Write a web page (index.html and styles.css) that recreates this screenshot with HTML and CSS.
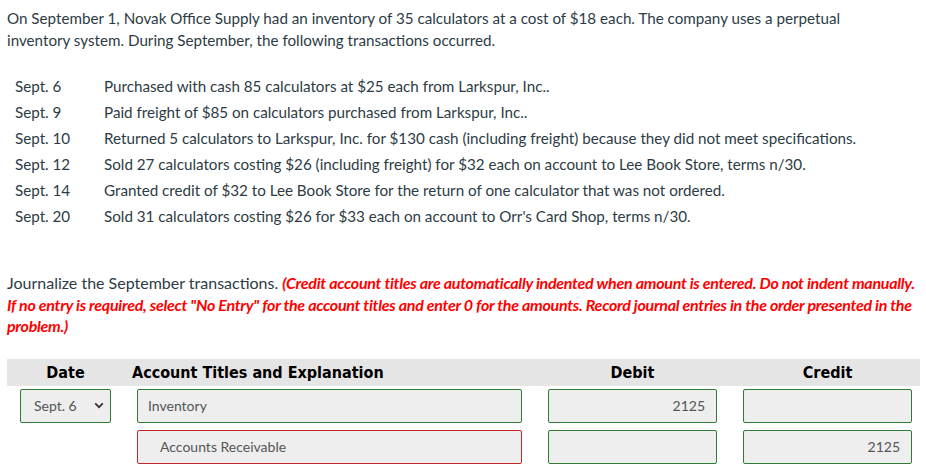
FILE: index.html
```
<!DOCTYPE html>
<html>
<head>
<meta charset="utf-8">
<link rel="stylesheet" href="styles.css">
</head>
<body>
<div class="page">
  <p class="intro">On September 1, Novak Office Supply had an inventory of 35 calculators at a cost of $18 each. The company uses a perpetual inventory system. During September, the following transactions occurred.</p>
  <div class="txns">
    <div class="d">Sept. 6</div><div class="t">Purchased with cash 85 calculators at $25 each from Larkspur, Inc..</div>
    <div class="d">Sept. 9</div><div class="t">Paid freight of $85 on calculators purchased from Larkspur, Inc..</div>
    <div class="d">Sept. 10</div><div class="t">Returned 5 calculators to Larkspur, Inc. for $130 cash (including freight) because they did not meet specifications.</div>
    <div class="d">Sept. 12</div><div class="t">Sold 27 calculators costing $26 (including freight) for $32 each on account to Lee Book Store, terms n/30.</div>
    <div class="d">Sept. 14</div><div class="t">Granted credit of $32 to Lee Book Store for the return of one calculator that was not ordered.</div>
    <div class="d">Sept. 20</div><div class="t">Sold 31 calculators costing $26 for $33 each on account to Orr's Card Shop, terms n/30.</div>
  </div>
  <p class="instr">Journalize the September transactions. <span class="red">(Credit account titles are automatically indented when amount is entered. Do not indent manually. If no entry is required, select "No Entry" for the account titles and enter 0 for the amounts. Record journal entries in the order presented in the problem.)</span></p>
  <div class="journal">
    <div class="grid head">
      <div class="h c">Date</div>
      <div class="h acct">Account Titles and Explanation</div>
      <div class="h c">Debit</div>
      <div class="h c">Credit</div>
    </div>
    <div class="grid row">
      <div class="box sel ok"><span>Sept. 6</span><svg width="10" height="7" viewBox="0 0 10 7"><path d="M1.2 1.4 L5 5.2 L8.8 1.4" fill="none" stroke="#333" stroke-width="1.8"/></svg></div>
      <div class="box ok">Inventory</div>
      <div class="box ok num">2125</div>
      <div class="box ok num"></div>
    </div>
    <div class="grid row">
      <div></div>
      <div class="box bad indent">Accounts Receivable</div>
      <div class="box ok num"></div>
      <div class="box ok num">2125</div>
    </div>
  </div>
</div>
</body>
</html>
```
FILE: styles.css
```
html, body {
  margin: 0;
  padding: 0;
  background: #fff;
}
.page {
  padding: 7px 5px 0 7px;
  font-family: Lato, "Noto Sans", sans-serif;
  font-size: 15.2px;
  color: #2d3b45;
}
.intro {
  margin: 0;
  line-height: 22px;
  max-width: 880px;
}
.txns {
  display: grid;
  grid-template-columns: 89px 1fr;
  grid-auto-rows: 26px;
  align-items: center;
  margin: 22px 0 0 8px;
}
.instr {
  margin: 43px 0 0 0;
  font-size: 16px;
  line-height: 21.6px;
}
.red {
  color: #ff0000;
  font-weight: bold;
  font-style: italic;
  letter-spacing: -0.27px;
}
.journal {
  margin-top: 22px;
  width: 913px;
}
.grid {
  display: grid;
  grid-template-columns: 91px 385px 169px 169px;
  column-gap: 26px;
  padding-left: 13px;
}
.head {
  background: #e5e5e5;
  height: 27px;
  align-items: center;
}
.h {
  font-family: "DejaVu Sans Condensed", "DejaVu Sans", sans-serif;
  font-weight: bold;
  font-size: 16px;
  color: #000;
  padding-top: 1px;
}
.h.c {
  text-align: center;
}
.h.acct {
  margin-left: -5px;
}
.row {
  margin-top: 3px;
}
.row + .row {
  margin-top: 7px;
}
.box {
  box-sizing: border-box;
  height: 34px;
  background: #eeeeee;
  border: 1px solid #2e7d32;
  border-radius: 2px;
  display: flex;
  align-items: center;
  padding: 0 10px;
  font-size: 14px;
  color: #555;
}
.box.bad {
  border-color: #c62828;
}
.indent {
  padding-left: 22px;
}
.num {
  justify-content: flex-end;
  padding-right: 11px;
}
.sel {
  justify-content: space-between;
  padding: 0 6px 0 13px;
}
```
